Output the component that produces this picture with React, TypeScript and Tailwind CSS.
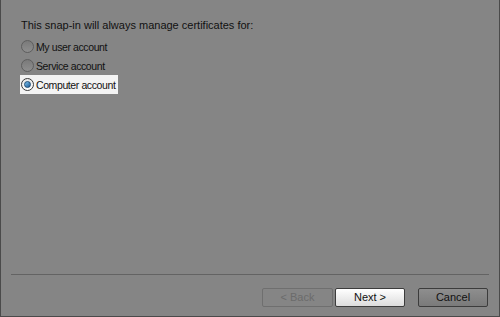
import React from "react";

const options = [
  { label: "My user account", checked: false },
  { label: "Service account", checked: false },
  { label: "Computer account", checked: true },
];

function Radio({ checked }: { checked: boolean }) {
  return (
    <span
      className={
        "flex h-[13px] w-[13px] shrink-0 items-center justify-center rounded-full border " +
        (checked
          ? "border-[#3a3a3a] bg-gradient-to-b from-[#e8e8e8] to-[#ffffff]"
          : "border-[#5e5e5e] bg-gradient-to-b from-[#7a7a7a] to-[#8e8e8e]")
      }
    >
      {checked && (
        <span className="h-[7px] w-[7px] rounded-full bg-gradient-to-br from-[#7fc4ee] to-[#1a5a96] border border-[#1d4a73]" />
      )}
    </span>
  );
}

export default function App() {
  return (
    <div
      className="flex h-[317px] w-[500px] flex-col border-b border-l border-r border-[#4a4a4a] bg-[#858585] text-[11px] text-[#111]"
      style={{ fontFamily: '"Liberation Sans", Arial, sans-serif' }}
    >
      <div className="flex-1 pl-[20px] pt-[18px]">
        <p className="leading-[14px]">This snap-in will always manage certificates for:</p>
        <div className="mt-[5px] flex flex-col">
          {options.map((o) => (
            <div
              key={o.label}
              className={
                "-ml-[1px] flex h-[19px] w-fit items-center gap-[2px] pl-[1px] pr-[3px] " +
                (o.checked ? "bg-[#f3f3f3]" : "")
              }
            >
              <Radio checked={o.checked} />
              <span className="text-[10.5px] leading-[14px] tracking-[-0.4px]">{o.label}</span>
            </div>
          ))}
        </div>
      </div>

      <div className="mx-[10px] h-[2px] border-t border-[#636363] border-b-[#8c8c8c]" />

      <div className="flex items-center justify-end gap-[2px] pr-[11px] pb-[9px] pt-[12px]">
        <button className="h-[19px] w-[71px] rounded-[2px] border border-[#6f6f6f] text-[#6b6b6b]">
          &lt; Back
        </button>
        <button className="h-[19px] w-[70px] rounded-[2px] border border-[#3c3c3c] bg-gradient-to-b from-[#ffffff] to-[#dcdcdc] text-[#111]">
          Next &gt;
        </button>
        <button className="ml-[11px] h-[19px] w-[70px] rounded-[2px] border border-[#3c3c3c] bg-gradient-to-b from-[#8e8e8e] to-[#7a7a7a] text-[#111]">
          Cancel
        </button>
      </div>
    </div>
  );
}
